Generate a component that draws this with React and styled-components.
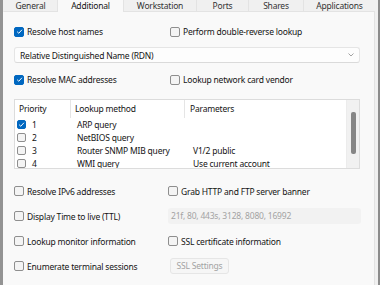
import React from 'react';
import styled, { createGlobalStyle } from 'styled-components';

const GlobalStyle = createGlobalStyle`
	html, body {
		margin: 0;
		padding: 0;
		background: #f0f0f0;
	}
	body {
		font-family: 'Noto Sans', 'Open Sans', sans-serif;
		font-size: 8.5px;
		letter-spacing: -0.2px;
		color: #141414;
	}
`;

const Window = styled.div`
	width: 380px;
	height: 285px;
	box-sizing: border-box;
	border-left: 3px solid #939393;
	border-right: 2px solid #8c8c8c;
	display: flex;
	flex-direction: column;
	overflow: hidden;
	background: #f0f0f0;
`;

const TabBar = styled.div`
	display: flex;
	width: 372px;
	height: 12px;
	flex-shrink: 0;
`;

const Tab = styled.div`
	width: ${p => p.$w}px;
	box-sizing: border-box;
	text-align: center;
	line-height: 11px;
	color: ${p => (p.$active ? '#141414' : '#333')};
	background: ${p => (p.$active ? '#f9f9f9' : '#f0f0f0')};
	border-bottom: ${p => (p.$active ? 'none' : '1px solid #e3e3e3')};
	border-left: 1px solid ${p => (p.$first ? 'transparent' : '#e3e3e3')};
`;

const Panel = styled.div`
	flex: 1;
	width: 372px;
	box-sizing: border-box;
	background: #f9f9f9;
	border-right: 1px solid #e3e3e3;
	padding: 12px 14px 0 11px;
	display: flex;
	flex-direction: column;
`;

const Row = styled.div`
	display: grid;
	grid-template-columns: 156px 1fr;
	align-items: center;
	height: 15px;
	margin-top: ${p => p.$mt || 0}px;
`;

const Option = styled.label`
	display: flex;
	align-items: center;
	gap: 3px;
	white-space: nowrap;
`;

const Box = styled.span`
	width: ${p => p.$size || 10}px;
	height: ${p => p.$size || 10}px;
	box-sizing: border-box;
	border-radius: 2px;
	flex-shrink: 0;
	display: flex;
	align-items: center;
	justify-content: center;
	background: ${p => (p.$checked ? '#0067c0' : '#f4f4f4')};
	border: 1px solid ${p => (p.$checked ? '#0067c0' : '#8e8e8e')};
`;

const Check = ({ checked, size }) => (
	<Box $checked={checked} $size={size}>
		{checked && (
			<svg width="7" height="7" viewBox="0 0 8 8">
				<polyline points="1.3,4.2 3.2,6 6.8,2" fill="none" stroke="#fff" strokeWidth="1.1" />
			</svg>
		)}
	</Box>
);

const Dropdown = styled.div`
	margin-top: 8px;
	height: 16px;
	box-sizing: border-box;
	background: #fdfdfd;
	border: 1px solid #e5e5e5;
	border-bottom-color: #dadada;
	border-radius: 3px;
	display: flex;
	align-items: center;
	justify-content: space-between;
	padding: 0 5px 0 5px;
`;

const ListBox = styled.div`
	margin-top: 12px;
	height: 70px;
	box-sizing: border-box;
	background: #fff;
	border: 1px solid #dcdcdc;
	display: flex;
	overflow: hidden;
`;

const ListBody = styled.div`
	flex: 1;
	display: grid;
	grid-template-columns: 56px 114px 1fr;
	grid-template-rows: 18px;
	grid-auto-rows: 13px;
	align-items: center;
`;

const HeadCell = styled.div`
	height: 18px;
	line-height: 18px;
	padding-left: ${p => p.$pl}px;
	border-right: ${p => (p.$sep ? '1px solid #e5e5e5' : 'none')};
	box-sizing: border-box;
`;

const Cell = styled.div`
	display: flex;
	align-items: center;
	gap: 6px;
	padding-left: ${p => p.$pl}px;
	white-space: nowrap;
`;

const ScrollTrack = styled.div`
	width: 13px;
	background: #f1f1f1;
	border-left: 1px solid #ececec;
	display: flex;
	justify-content: center;
	padding-top: 12px;
	box-sizing: border-box;
`;

const Thumb = styled.div`
	width: 5px;
	height: 42px;
	border-radius: 2px;
	background: #868686;
`;

const OptionGrid = styled.div`
	margin-top: 14px;
	display: grid;
	grid-template-columns: 154px 193px;
	grid-auto-rows: 16px;
	row-gap: 9px;
	align-items: center;
`;

const TextInput = styled.div`
	height: 16px;
	box-sizing: border-box;
	background: #f2f2f2;
	border-radius: 3px;
	color: #a3a3a3;
	padding-left: 3px;
	line-height: 16px;
`;

const Button = styled.div`
	width: 59px;
	height: 16px;
	box-sizing: border-box;
	margin-left: 2px;
	background: #f6f6f6;
	border: 1px solid #e6e6e6;
	border-radius: 3px;
	color: #a3a3a3;
	text-align: center;
	line-height: 14px;
`;

const tabs = [
	['General', 54],
	['Additional', 66],
	['Workstation', 73],
	['Ports', 52],
	['Shares', 55],
	['Applications', 72],
];

const methods = [
	[true, '1', 'ARP query', ''],
	[false, '2', 'NetBIOS query', ''],
	[false, '3', 'Router SNMP MIB query', 'V1/2 public'],
	[false, '4', 'WMI query', 'Use current account'],
];

const App = () => (
	<Window>
		<GlobalStyle />
		<TabBar>
			{tabs.map(([name, w], i) => (
				<Tab key={name} $w={w} $active={name === 'Additional'} $first={i === 0}>
					{name}
				</Tab>
			))}
		</TabBar>
		<Panel>
			<Row>
				<Option><Check checked />Resolve host names</Option>
				<Option><Check />Perform double-reverse lookup</Option>
			</Row>
			<Dropdown>
				<span>Relative Distinguished Name (RDN)</span>
				<svg width="6" height="4" viewBox="0 0 6 4">
					<polyline points="0.5,0.5 3,3 5.5,0.5" fill="none" stroke="#8a8a8a" strokeWidth="0.8" />
				</svg>
			</Dropdown>
			<Row $mt={9}>
				<Option><Check checked />Resolve MAC addresses</Option>
				<Option><Check />Lookup network card vendor</Option>
			</Row>
			<ListBox>
				<ListBody>
					<HeadCell $pl={4} $sep>Priority</HeadCell>
					<HeadCell $pl={4} $sep>Lookup method</HeadCell>
					<HeadCell $pl={5}>Parameters</HeadCell>
					{methods.map(([on, n, method, params]) => (
						<React.Fragment key={n}>
							<Cell $pl={2}><Check checked={on} size={9} />{n}</Cell>
							<Cell $pl={6}>{method}</Cell>
							<Cell $pl={8}>{params}</Cell>
						</React.Fragment>
					))}
				</ListBody>
				<ScrollTrack>
					<Thumb />
				</ScrollTrack>
			</ListBox>
			<OptionGrid>
				<Option><Check />Resolve IPv6 addresses</Option>
				<Option><Check />Grab HTTP and FTP server banner</Option>
				<Option><Check />Display Time to live (TTL)</Option>
				<TextInput>21f, 80, 443s, 3128, 8080, 16992</TextInput>
				<Option><Check />Lookup monitor information</Option>
				<Option><Check />SSL certificate information</Option>
				<Option><Check />Enumerate terminal sessions</Option>
				<Button>SSL Settings</Button>
			</OptionGrid>
		</Panel>
	</Window>
);

export default App;
